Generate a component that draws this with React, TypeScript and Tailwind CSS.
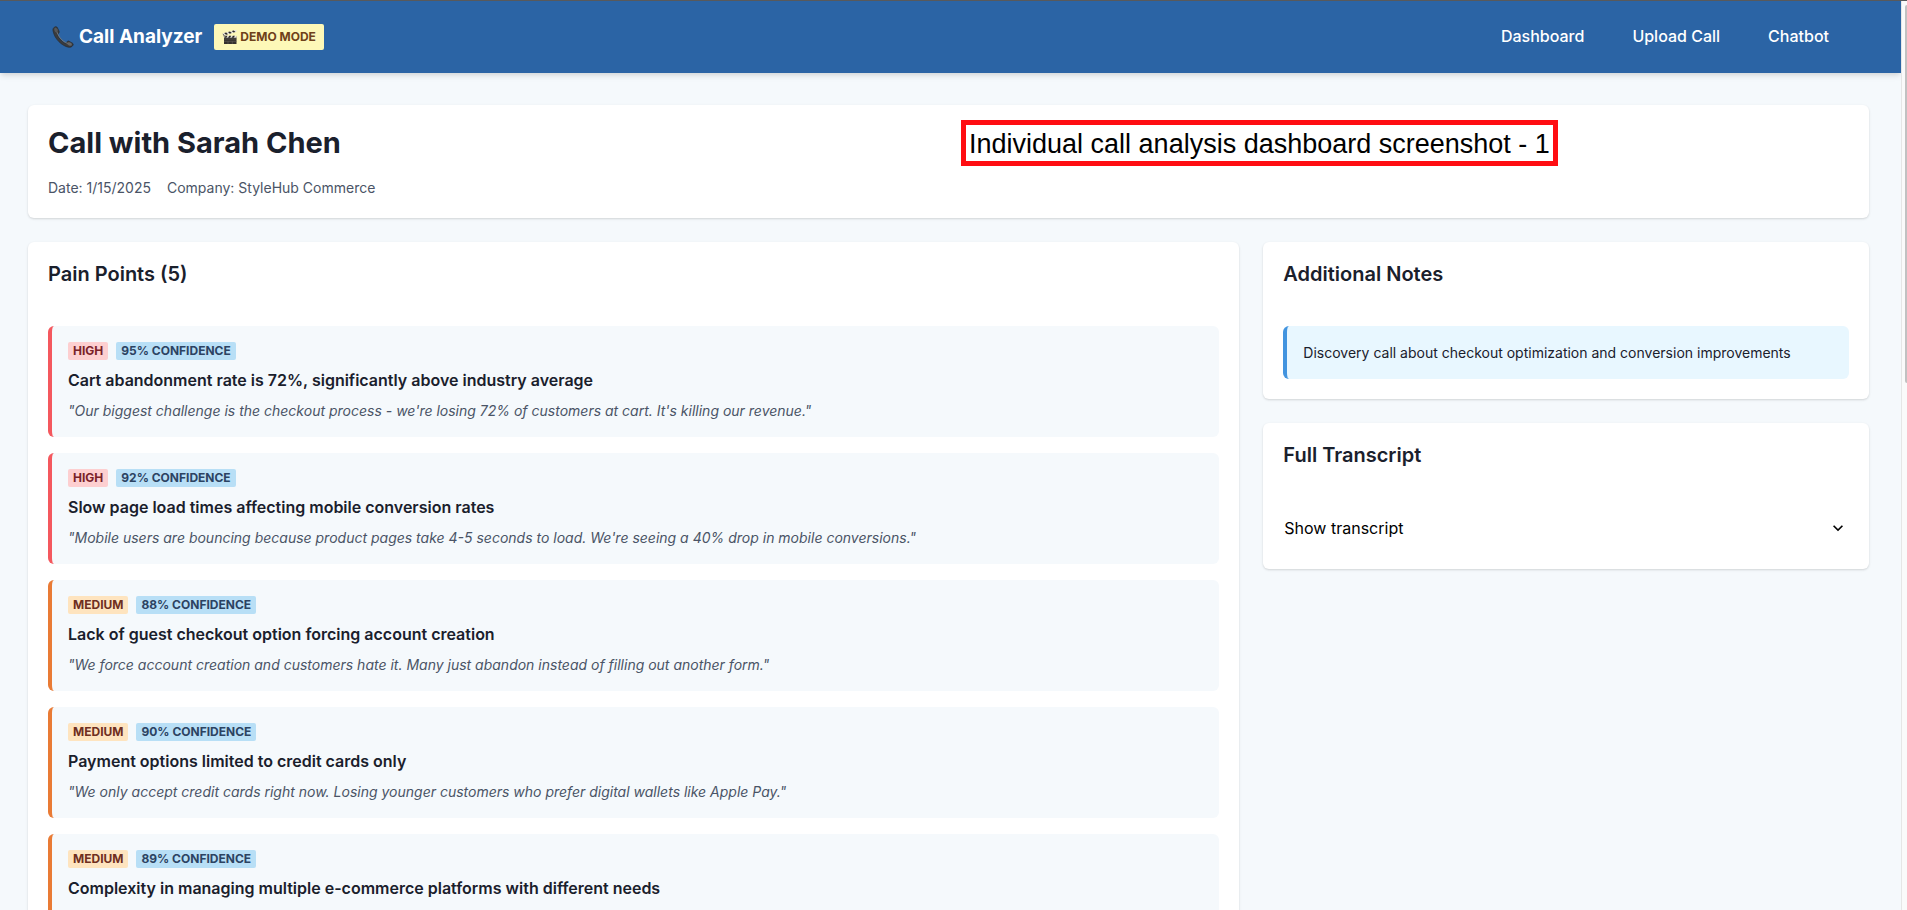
import React, { useState } from "react";

type Severity = "high" | "medium";

interface PainPoint {
  severity: Severity;
  confidence: number;
  title: string;
  quote: string;
}

const painPoints: PainPoint[] = [
  {
    severity: "high",
    confidence: 95,
    title: "Cart abandonment rate is 72%, significantly above industry average",
    quote: "\"Our biggest challenge is the checkout process - we're losing 72% of customers at cart. It's killing our revenue.\"",
  },
  {
    severity: "high",
    confidence: 92,
    title: "Slow page load times affecting mobile conversion rates",
    quote: "\"Mobile users are bouncing because product pages take 4-5 seconds to load. We're seeing a 40% drop in mobile conversions.\"",
  },
  {
    severity: "medium",
    confidence: 88,
    title: "Lack of guest checkout option forcing account creation",
    quote: '"We force account creation and customers hate it. Many just abandon instead of filling out another form."',
  },
  {
    severity: "medium",
    confidence: 90,
    title: "Payment options limited to credit cards only",
    quote: '"We only accept credit cards right now. Losing younger customers who prefer digital wallets like Apple Pay."',
  },
  {
    severity: "medium",
    confidence: 89,
    title: "Complexity in managing multiple e-commerce platforms with different needs",
    quote: "",
  },
];

const severityStyles: Record<Severity, { edge: string; badge: string }> = {
  high: { edge: "border-[#f4585e]", badge: "bg-[#fdcfd0] text-[#7a2228]" },
  medium: { edge: "border-[#e97b35]", badge: "bg-[#fee4bf] text-[#6f2f1f]" },
};

function PhoneIcon() {
  return (
    <svg viewBox="0 0 22 22" className="h-[22px] w-[22px]" aria-hidden="true">
      <path
        d="M3.2.8C1.6 1.4.6 2.900 1 4.800c.8 4.200 3 8 6 11 2.900 2.900 6.200 4.700 9.300 5.400 1.900.4 3.700-.3 4.600-1.800.5-.8.4-1.700-.4-2.200l-3.300-1.900c-.8-.5-1.600-.3-2.100.4l-.8 1c-.4.500-.9.6-1.500.300-1.600-.9-3.100-2-4.300-3.400C7.300 12.300 6.400 10.900 5.700 9.300c-.2-.6-.1-1 .3-1.400l.8-.9c.5-.6.600-1.300.2-2L5.300 1.500C4.800.7 4.100.5 3.200.8Z"
        fill="#3a3b3d"
        stroke="#25272a"
        strokeWidth=".6"
      />
      <path d="M3.300 2.200c2 4.800 3.300 8.400 6 11.100 2.600 2.600 5.700 4.200 9.800 5.400" fill="none" stroke="#77797b" strokeWidth=".9" strokeLinecap="round" />
      <ellipse cx="4" cy="4" rx="1.600" ry="2.300" fill="#55575a" transform="rotate(-25 4 4)" />
      <ellipse cx="17.600" cy="18" rx="2.300" ry="1.500" fill="#636568" transform="rotate(22 17.600 18)" />
    </svg>
  );
}

function ClapperIcon() {
  return (
    <svg viewBox="0 0 16 16" className="h-4 w-4" aria-hidden="true">
      <path d="M2 7.300h12.500V15H2z" fill="#34312d" />
      <path d="M2 10h12.500M2 12.300h12.500M6 12.300V15M10.300 12.300V15" stroke="#66615a" strokeWidth=".6" />
      <path d="M2 6.800h12.500v1.900H2z" fill="#e9e7df" />
      <path d="M3.500 6.800h2L4.300 8.700H2.300zM7.200 6.800h2L8 8.700H6zM10.900 6.800h2l-1.200 1.900h-2z" fill="#2b2926" />
      <path d="M.6 4.400 14.200.8l.6 2L1.300 6.500z" fill="#e9e7df" />
      <path d="m2.200 4 2-.5 1.800 1.700-2 .5zM6 3l2-.5 1.800 1.600-2 .6zM9.800 2l2-.5 1.700 1.600-2 .5zM.6 4.400l.7 2.100 1.100-.3z" fill="#2b2926" />
      <circle cx="2.500" cy="6.900" r="1" fill="#8c8981" />
    </svg>
  );
}

function Badge({ className, children }: { className: string; children: React.ReactNode }) {
  return (
    <span className={`rounded-xs px-[5px] text-xs/[18px] font-bold uppercase ${className}`}>{children}</span>
  );
}

function Card({ title, children }: { title: string; children: React.ReactNode }) {
  return (
    <section className="rounded-md bg-white shadow-[0_1px_3px_rgba(0,0,0,0.1),0_1px_2px_rgba(0,0,0,0.06)]">
      <h2 className="p-5 text-xl/6 font-semibold">{title}</h2>
      <div className="p-5">{children}</div>
    </section>
  );
}

function PainPointItem({ point }: { point: PainPoint }) {
  const style = severityStyles[point.severity];
  return (
    <li className={`flex flex-col gap-2 rounded-md border-l-4 bg-[#f5f9fc] p-4 ${style.edge}`}>
      <div className="flex gap-2">
        <Badge className={style.badge}>{point.severity}</Badge>
        <Badge className="bg-[#b8dff6] text-[#2c4362]">{point.confidence}% confidence</Badge>
      </div>
      <h3 className="text-base/6 font-semibold">{point.title}</h3>
      <p className="min-h-[21px] text-sm/[21px] text-[#4a5466] italic">{point.quote}</p>
    </li>
  );
}

function Navbar() {
  return (
    <header className="relative flex h-[72px] shrink-0 items-center justify-between bg-[#2b64a5] pr-14 pl-[52px] text-white shadow-[0_4px_6px_-1px_rgba(0,0,0,0.1),0_2px_4px_-1px_rgba(0,0,0,0.06)]">
      <div className="flex items-center gap-3">
        <a href="#home" className="flex items-center gap-[5px] text-[19px]/[30px] font-bold">
          <PhoneIcon />
          Call Analyzer
        </a>
        <span className="flex items-center gap-0.5 rounded-xs bg-[#fdf8b8] px-2 py-1 text-xs/[18px] font-bold text-[#6f411a]">
          <ClapperIcon />
          DEMO MODE
        </span>
      </div>
      <nav className="flex gap-4 pb-0.5 text-base/6 font-medium">
        <a href="#dashboard" className="px-4 py-2">Dashboard</a>
        <a href="#upload" className="px-4 py-2">Upload Call</a>
        <a href="#chatbot" className="px-4 py-2">Chatbot</a>
      </nav>
    </header>
  );
}

export default function App() {
  const [open, setOpen] = useState(false);
  return (
    <div className="flex h-screen flex-col overflow-hidden border-t border-[#58595b] bg-[#f5f9fc] font-[Inter,sans-serif] text-[#1a202c]">
      <div className="flex min-h-0 flex-1">
        <div className="flex min-w-0 flex-1 flex-col overflow-hidden">
          <Navbar />
          <main className="flex flex-col gap-6 py-8 pr-8 pl-7">
            <section className="relative flex flex-col gap-4 rounded-md bg-white p-5 shadow-[0_1px_3px_rgba(0,0,0,0.1),0_1px_2px_rgba(0,0,0,0.06)]">
              <h1 className="text-[29px]/9 font-bold">Call with Sarah Chen</h1>
              <div className="flex gap-4 text-sm/[21px] text-[#4a5466]">
                <span>Date: 1/15/2025</span>
                <span>Company: StyleHub Commerce</span>
              </div>
              <p className="absolute top-[15px] left-[933px] border-[5px] border-[#ff0d12] bg-white px-[3px] pt-0.5 font-['Liberation_Sans',sans-serif] text-[27px]/[34px] whitespace-nowrap text-black">
                Individual call analysis dashboard screenshot - 1
              </p>
            </section>
            <div className="grid grid-cols-[2fr_1fr] items-start gap-6">
              <Card title="Pain Points (5)">
                <ul className="flex flex-col gap-4">
                  {painPoints.map((point) => (
                    <PainPointItem key={point.title} point={point} />
                  ))}
                </ul>
              </Card>
              <div className="flex flex-col gap-6">
                <Card title="Additional Notes">
                  <p className="rounded-md border-l-4 border-[#4294df] bg-[#e8f7ff] p-4 text-sm/[21px]">
                    Discovery call about checkout optimization and conversion improvements
                  </p>
                </Card>
                <Card title="Full Transcript">
                  <button
                    type="button"
                    aria-expanded={open}
                    onClick={() => setOpen(!open)}
                    className="flex w-full items-center justify-between border border-transparent py-2 text-base/6 text-black"
                  >
                    Show transcript
                    <svg viewBox="0 0 24 24" className="h-5 w-5" fill="currentColor" aria-hidden="true">
                      <path d="M16.59 8.590 12 13.170 7.410 8.590 6 10l6 6 6-6z" />
                    </svg>
                  </button>
                </Card>
              </div>
            </div>
          </main>
        </div>
        <div className="w-1.5 shrink-0 border-l border-[#e6e6e6] bg-[#fafafa] pt-1 pl-[3px]" aria-hidden="true">
          <div className="h-[378px] rounded-l-full bg-[#c1c1c1]" />
        </div>
      </div>
    </div>
  );
}
